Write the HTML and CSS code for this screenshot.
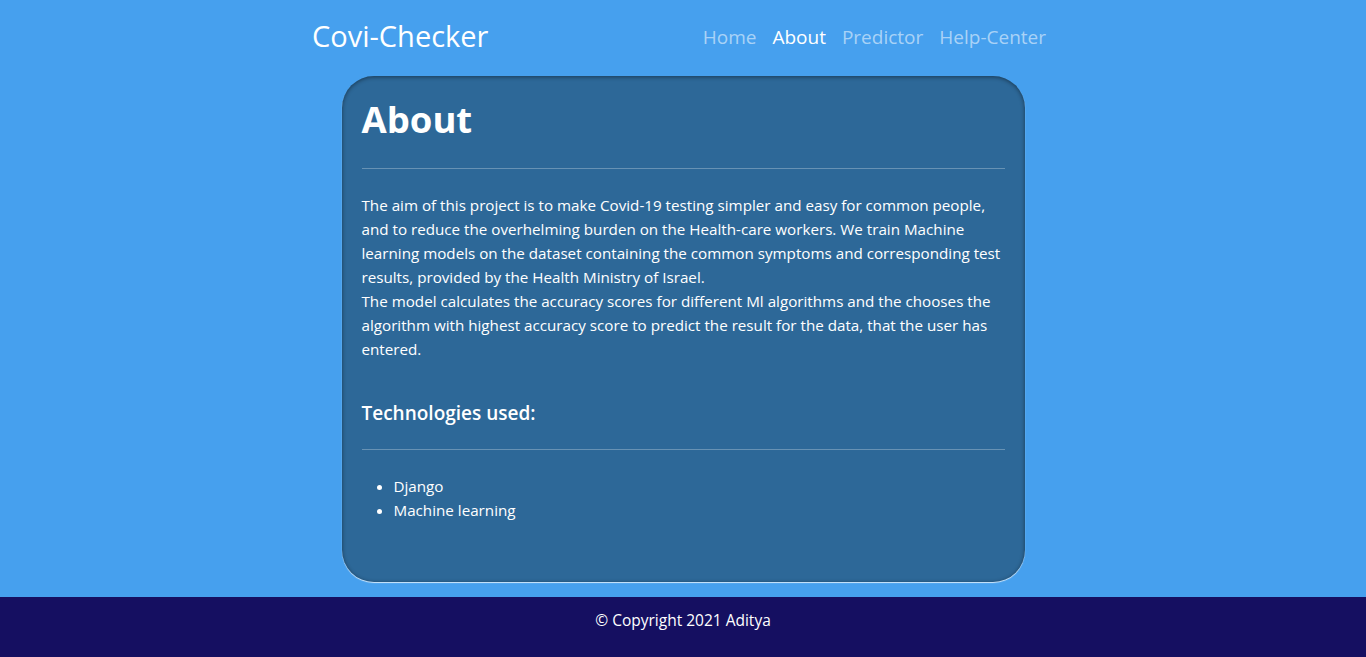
FILE: index.html
```html
<!DOCTYPE html>
<html lang="en">
<head>
<meta charset="utf-8">
<title>Covi-Checker | About</title>
<link rel="stylesheet" href="styles.css">
</head>
<body>
<header class="navbar">
  <div class="nav-inner">
    <a class="brand" href="#">Covi-Checker</a>
    <nav class="nav-links">
      <a class="nav-link" href="#">Home</a>
      <a class="nav-link active" href="#">About</a>
      <a class="nav-link" href="#">Predictor</a>
      <a class="nav-link" href="#">Help-Center</a>
    </nav>
  </div>
</header>
<main class="main">
  <section class="card">
    <h1 class="title">About</h1>
    <hr class="rule rule-top">
    <p class="text">The aim of this project is to make Covid-19 testing simpler and easy for common people, and to reduce the overhelming burden on the Health-care workers. We train Machine learning models on the dataset containing the common symptoms and corresponding test results, provided by the Health Ministry of Israel.<br>The model calculates the accuracy scores for different Ml algorithms and the chooses the algorithm with highest accuracy score to predict the result for the data, that the user has entered.</p>
    <h5 class="subtitle">Technologies used:</h5>
    <hr class="rule">
    <ul class="list">
      <li>Django</li>
      <li>Machine learning</li>
    </ul>
  </section>
</main>
<footer class="footer">
  <p class="copy">© Copyright 2021 Aditya</p>
</footer>
</body>
</html>
```
FILE: styles.css
```css
* { box-sizing: border-box; }
html, body { margin: 0; padding: 0; }
body {
  background: #46a0ee;
  color: #fff;
  font-family: "Open Sans", "Noto Sans", sans-serif;
  font-size: 15.2px;
  line-height: 24px;
}
a { text-decoration: none; }

.navbar { height: 72px; display: flex; justify-content: center; }
.nav-inner {
  width: 742px;
  display: flex;
  align-items: center;
  justify-content: space-between;
}
.brand { color: #fff; font-size: 29px; line-height: 40px; }
.nav-links { display: flex; padding-top: 2px; }
.nav-link {
  color: rgba(255, 255, 255, 0.55);
  font-size: 19px;
  line-height: 28px;
  padding: 0 8px;
}
.nav-link.active { color: #fff; }

.main { display: flex; justify-content: center; padding: 4px 0 15px; }
.card {
  width: 683px;
  background: #2d6898;
  border-radius: 32px;
  padding: 19px 20px 44px;
  box-shadow: inset 0 1px 4px rgba(0, 0, 0, 0.45), 0 1px 1px rgba(255, 255, 255, 0.75);
}
.title {
  margin: 0;
  font-size: 36.5px;
  font-weight: 700;
  line-height: 48px;
}
.rule {
  margin: 24px 0;
  border: 0;
  border-top: 1px solid rgba(255, 255, 255, 0.28);
}
.rule-top { margin-top: 25px; }
.text { margin: 0 0 40px; }
.subtitle {
  margin: 0;
  font-size: 19px;
  font-weight: 600;
  line-height: 24px;
}
.list { margin: 0 0 16px; padding-left: 32px; }

.footer {
  background: #150f61;
  padding: 11px 0 25px;
  text-align: center;
}
.copy { margin: 0; font-size: 15.5px; line-height: 24px; }
```
